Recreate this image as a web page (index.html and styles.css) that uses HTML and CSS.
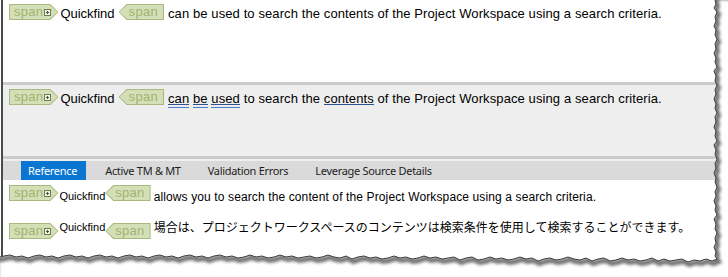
FILE: index.html
```html
<!DOCTYPE html>
<html lang="en">
<head>
  <meta charset="UTF-8">
  <meta name="viewport" content="width=device-width, initial-scale=1.0">
  <title>Editor panes</title>
  <link rel="stylesheet" href="styles.css">
</head>
<body>
  <div class="frame">
    <!-- source segment -->
    <div class="pane pane-source">
      <div class="seg">
        <span class="tag tag-open"><span class="tag-body">span<svg class="expand" viewBox="0 0 7 7" width="7" height="7"><rect x=".5" y=".5" width="6" height="6" fill="#eef2e2" stroke="#6f7d55"/><path d="M2 3.5h3M3.5 2v3" stroke="#4d5540"/></svg></span></span>
        <span class="word">Quickfind</span>
        <span class="tag tag-close"><span class="tag-body">span</span></span>
        <span class="text">can be used to search the contents of the Project Workspace using a search criteria.</span>
      </div>
    </div>
    <div class="divider"></div>

    <!-- target segment -->
    <div class="pane pane-target">
      <div class="seg">
        <span class="tag tag-open"><span class="tag-body">span<svg class="expand" viewBox="0 0 7 7" width="7" height="7"><rect x=".5" y=".5" width="6" height="6" fill="#eef2e2" stroke="#6f7d55"/><path d="M2 3.5h3M3.5 2v3" stroke="#4d5540"/></svg></span></span>
        <span class="word">Quickfind</span>
        <span class="tag tag-close"><span class="tag-body">span</span></span>
        <span class="text"><span class="mark-dbl">can</span> <span class="mark-dbl">be</span> <span class="mark-dbl">used</span> to search the <span class="mark">contents</span> of the Project Workspace using a search criteria.</span>
      </div>
    </div>
    <div class="divider"></div>

    <div class="tabs">
      <span class="tab tab-active">Reference</span>
      <span class="tab">Active TM &amp; MT</span>
      <span class="tab">Validation Errors</span>
      <span class="tab">Leverage Source Details</span>
    </div>

    <!-- reference pane -->
    <div class="pane pane-ref">
      <div class="seg seg-small">
        <span class="tag tag-open"><span class="tag-body">span<svg class="expand" viewBox="0 0 7 7" width="7" height="7"><rect x=".5" y=".5" width="6" height="6" fill="#eef2e2" stroke="#6f7d55"/><path d="M2 3.5h3M3.5 2v3" stroke="#4d5540"/></svg></span></span>
        <span class="word">Quickfind</span>
        <span class="tag tag-close"><span class="tag-body">span</span></span>
        <span class="text">allows you to search the content of the Project Workspace using a search criteria.</span>
      </div>
      <div class="seg seg-small seg-ja">
        <span class="tag tag-open"><span class="tag-body">span<svg class="expand" viewBox="0 0 7 7" width="7" height="7"><rect x=".5" y=".5" width="6" height="6" fill="#eef2e2" stroke="#6f7d55"/><path d="M2 3.5h3M3.5 2v3" stroke="#4d5540"/></svg></span></span>
        <span class="word">Quickfind</span>
        <span class="tag tag-close"><span class="tag-body">span</span></span>
        <span class="text" lang="ja">場合は、プロジェクトワークスペースのコンテンツは検索条件を使用して検索することができます。</span>
      </div>
    </div>
  </div>

  <!-- torn paper edge -->
  <svg class="torn" viewBox="0 0 728 277" width="728" height="277">
    <defs>
      <polygon id="outside" points="715,-5 715,0 716,4 714,8 717,12 715,17 716,21 714,26 716,30 715,35 717,39 715,44 716,49 714,53 716,58 715,62 717,67 714,71 716,76 715,81 717,85 715,90 716,94 714,99 716,104 715,108 717,113 715,117 716,122 714,127 716,131 715,136 717,141 714,145 716,150 715,154 717,159 715,164 716,168 714,173 716,178 715,182 717,187 715,192 716,196 714,201 716,206 715,210 717,215 714,219 716,224 715,229 717,233 715,238 716,243 714,247 716,252 715,256 717,259 712,261 706,259 700,261 694,260 688,262 682,259 676,260 670,261 664,259 658,261 652,258 646,260 640,261 634,259 628,260 622,258 616,260 610,261 604,258 598,259 592,261 586,258 580,260 574,259 568,257 562,259 556,260 550,258 544,259 538,261 532,258 526,259 520,257 514,259 508,260 502,258 496,259 490,257 484,259 478,260 472,257 466,258 460,260 454,257 448,258 442,259 436,257 430,258 424,256 418,258 412,259 406,257 400,258 394,256 388,258 382,259 376,257 370,258 364,256 358,257 352,259 346,256 340,258 334,257 328,255 322,257 316,258 310,256 304,257 298,258 292,256 286,257 280,255 274,257 268,258 262,256 256,257 250,255 244,257 238,258 232,256 226,257 220,255 214,256 208,258 202,256 196,257 190,255 184,256 178,258 172,256 166,257 160,255 154,256 148,258 142,256 136,257 130,255 124,256 118,258 112,256 106,257 100,255 94,256 88,258 82,256 76,257 70,255 64,256 58,258 52,256 46,257 40,255 34,256 28,258 22,256 16,257 10,255 4,256 0,257 -5,257 -5,285 735,285 735,-5"/>
      <clipPath id="outside-clip"><use href="#outside"/></clipPath>
      <filter id="soft" x="-5%" y="-5%" width="110%" height="110%"><feGaussianBlur stdDeviation="1.4"/></filter>
    </defs>
    <use href="#outside" fill="#fff"/>
    <g clip-path="url(#outside-clip)">
      <use href="#outside" fill="none" stroke="#000" stroke-opacity=".55" stroke-width="5" transform="translate(1.5 2.5)" filter="url(#soft)"/>
    </g>
    <use href="#outside" fill="none" stroke="#3a3a3a" stroke-width="1"/>
  </svg>
</body>
</html>
```

FILE: styles.css
```css
* {
  box-sizing: border-box;
}

body {
  margin: 0;
  position: relative;
  width: 728px;
  height: 277px;
  overflow: hidden;
  background: #fff;
  font-family: "Liberation Sans", Arial, sans-serif;
  color: #000;
}

.frame {
  margin-left: 1px;
  height: 277px;
  border-left: 2px solid #4a4a4a;
  display: flex;
  flex-direction: column;
}

.pane {
  padding-left: 6px;
  flex: none;
}

.pane-source {
  height: 82px;
  padding-top: 4px;
  background: #fff;
}

.pane-target {
  height: 71px;
  padding-top: 4px;
  background: #eee;
}

.pane-ref {
  flex: 1;
  padding-top: 5px;
  background: #fff;
}

.divider {
  height: 3px;
  flex: none;
  background: #cbcbcb;
}

/* tab strip */
.tabs {
  height: 21px;
  flex: none;
  display: flex;
  gap: 11px;
  padding-left: 18px;
  border-top: 2px solid #eee;
  background: #dadada;
  font-family: "Noto Sans", sans-serif;
  font-size: 11px;
  letter-spacing: -0.3px;
}

.tab {
  padding: 0 8px;
  line-height: 19px;
  color: #1e1e1e;
  white-space: nowrap;
}

.tab-active {
  padding: 0 9px 0 7px;
  background: #0a76d2;
  color: #fff;
}

/* segment rows */
.seg {
  display: flex;
  align-items: flex-start;
  height: 16px;
  white-space: nowrap;
}

.seg-small + .seg-small {
  margin-top: 22px;
}

.tag {
  display: flex;
  flex: none;
  height: 16px;
  padding: 1px;
  background: #a7b97f;
  color: #9fb370;
  font-size: 13px;
  line-height: 14px;
  letter-spacing: 0.3px;
}

.tag-body {
  display: flex;
  align-items: center;
  background: #d5dfb7;
}

.tag-open {
  clip-path: polygon(0 0, calc(100% - 8px) 0, 100% 50%, calc(100% - 8px) 100%, 0 100%);
}

.tag-open .tag-body {
  padding: 0 6px 0 4px;
  clip-path: polygon(0 0, calc(100% - 7.6px) 0, 100% 50%, calc(100% - 7.6px) 100%, 0 100%);
}

.tag-close {
  clip-path: polygon(0 50%, 8px 0, 100% 0, 100% 100%, 8px 100%);
}

.tag-close .tag-body {
  padding: 0 5px 0 9px;
  clip-path: polygon(0 50%, 7.6px 0, 100% 0, 100% 100%, 7.6px 100%);
}

.expand {
  margin-left: 1px;
  display: block;
}

.word {
  font-size: 13px;
  line-height: 16px;
  padding-top: 2px;
  margin: 0 4px 0 2px;
}

.text {
  font-size: 13px;
  line-height: 16px;
  padding-top: 2px;
  margin-left: 4px;
  letter-spacing: 0.1px;
}

.seg-small .word {
  font-size: 11px;
  line-height: 13px;
  padding-top: 5px;
  margin: 0 0 0 1px;
}

.seg-small .text {
  font-size: 12px;
  line-height: 14px;
  padding-top: 5px;
  margin-left: 3px;
  letter-spacing: 0.12px;
}

.seg-ja .word {
  padding-top: 0;
  margin-top: -2px;
}

.seg-ja .text {
  font-family: "Noto Sans CJK JP", sans-serif;
  line-height: 16px;
  padding-top: 0;
  margin-top: -4px;
  letter-spacing: 0;
}

/* QA marks */
.mark-dbl {
  padding-bottom: 2px;
  background-image: linear-gradient(#33528f, #33528f), linear-gradient(#4d7cc9, #4d7cc9);
  background-size: 100% 1px, 100% 1px;
  background-position: 0 calc(100% - 3px), 0 100%;
  background-repeat: no-repeat;
}

.mark {
  padding-bottom: 2px;
  background-image: linear-gradient(#2e4f93, #2e4f93);
  background-size: 100% 1px;
  background-position: 0 calc(100% - 3px);
  background-repeat: no-repeat;
}

.torn {
  position: absolute;
  left: 0;
  top: 0;
  pointer-events: none;
}
```
